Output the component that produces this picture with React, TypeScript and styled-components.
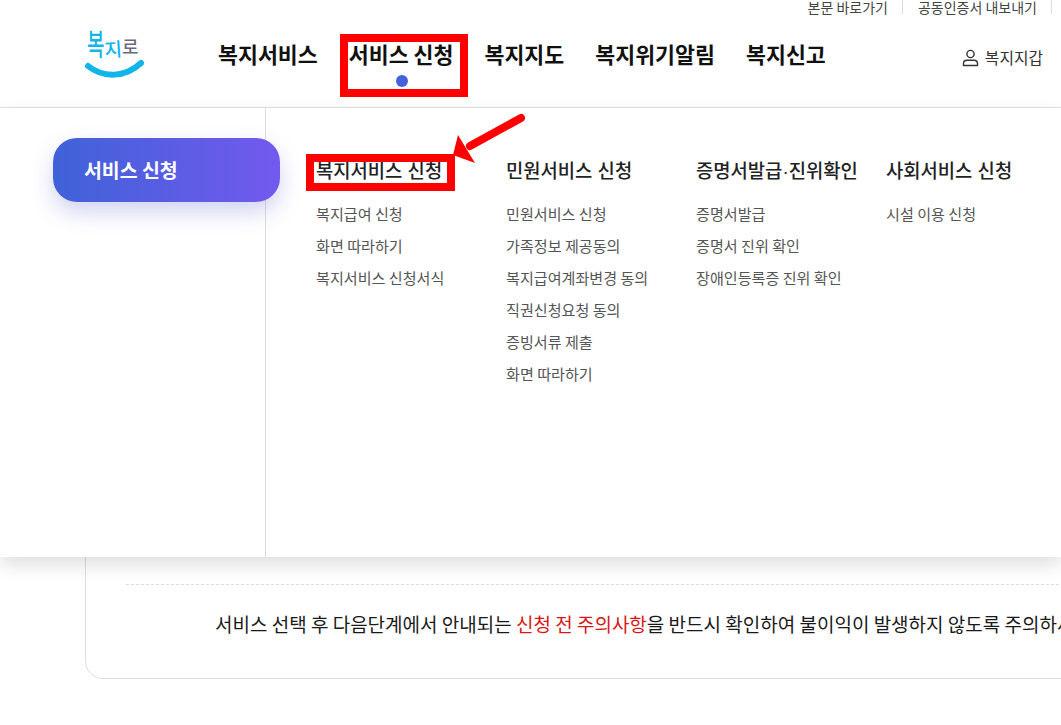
import styled, { createGlobalStyle } from 'styled-components';

const GlobalStyle = createGlobalStyle`
  html, body {
    margin: 0;
    padding: 0;
    background: #fff;
    font-family: 'Noto Sans CJK KR', 'Noto Sans', sans-serif;
    color: #111;
  }
  * { box-sizing: border-box; }
`;

const Page = styled.div`
  position: relative;
  width: 1061px;
  height: 725px;
  overflow: hidden;
  background: #fff;
`;

const Header = styled.header`
  height: 108px;
  border-bottom: 1px solid #e2e2e2;
  display: flex;
  flex-direction: column;
`;

const UtilBar = styled.div`
  height: 15px;
  display: flex;
  justify-content: flex-end;
  align-items: flex-start;
  padding-right: 9px;
  font-size: 14px;
  line-height: 14px;
  color: #444;
`;

const UtilLink = styled.span`
  padding: 0 14px 0 15px;
  border-right: 1px solid #ddd;
  white-space: nowrap;
`;

const MainBar = styled.div`
  flex: 1;
  display: flex;
  align-items: flex-start;
  padding-left: 85px;
`;

const Logo = styled.svg`
  margin-top: 12px;
  flex-shrink: 0;
  overflow: visible;
  font-weight: 500;
`;

const Nav = styled.nav`
  display: flex;
  gap: 31px;
  margin-left: 73px;
`;

const NavItem = styled.div`
  position: relative;
  font-size: 21.7px;
  font-weight: 700;
  line-height: 32px;
  margin-top: 23px;
  white-space: nowrap;
  color: #111;
`;

const NavDot = styled.span`
  position: absolute;
  left: 47px;
  top: 37px;
  width: 12px;
  height: 12px;
  border-radius: 50%;
  background: #4361d8;
`;

const NavMark = styled.span`
  position: absolute;
  left: -9px;
  top: -4px;
  width: 128px;
  height: 63px;
  border: 8px solid #ff0000;
`;

const Wallet = styled.div`
  display: flex;
  align-items: center;
  gap: 6px;
  margin-left: auto;
  margin-top: 32px;
  padding-right: 18px;
  font-size: 15.8px;
  line-height: 22px;
  color: #333;
`;

const Content = styled.main`
  padding: 0 0 0 85px;
`;

const Card = styled.section`
  width: 1100px;
  height: 571px;
  border: 1px solid #ddd;
  border-radius: 0 0 0 18px;
  display: flex;
  flex-direction: column;
  justify-content: flex-end;
  padding: 0 0 34px 40px;
`;

const Notice = styled.div`
  border-top: 1px dashed #ddd;
  padding: 24px 0 0 89px;
  height: 60px;
  font-size: 19px;
  line-height: 30px;
  white-space: nowrap;
  color: #1a1a1a;
`;

const NoticeRed = styled.span`
  color: #d81818;
`;

const Mega = styled.div`
  position: absolute;
  left: 0;
  right: 0;
  top: 108px;
  height: 449px;
  background: #fff;
  display: flex;
  box-shadow: 0 8px 18px rgba(0, 0, 0, 0.13);
`;

const Side = styled.aside`
  width: 266px;
  border-right: 1px solid #ddd;
  padding: 30px 0 0 53px;
  flex-shrink: 0;
`;

const SidePill = styled.div`
  width: 227px;
  height: 64px;
  padding: 0 0 2px 31px;
  border-radius: 24px;
  display: flex;
  align-items: center;
  font-size: 19.4px;
  font-weight: 700;
  color: #fff;
  white-space: nowrap;
  background: linear-gradient(90deg, #3f62d8, #7359ee);
  box-shadow: 0 10px 22px rgba(70, 80, 200, 0.25);
`;

const Columns = styled.div`
  display: flex;
  padding: 50px 0 0 50px;
`;

const Column = styled.div`
  width: 190px;
  flex-shrink: 0;
`;

const ColumnTitle = styled.div`
  position: relative;
  font-family: 'Liberation Sans', 'Noto Sans CJK KR', sans-serif;
  font-size: 18.8px;
  font-weight: 500;
  line-height: 28px;
  color: #222;
  white-space: nowrap;
  margin-bottom: 11px;
`;

const TitleMark = styled.span`
  position: absolute;
  left: -10px;
  top: -4px;
  width: 149px;
  height: 37px;
  border: 8px solid #ff0000;
`;

const ColumnItem = styled.div`
  font-size: 15.1px;
  line-height: 32px;
  color: #555;
  white-space: nowrap;
`;

const Arrow = styled.svg`
  position: absolute;
  left: 445px;
  top: 110px;
`;

const columns = [
  { title: '복지서비스 신청', items: ['복지급여 신청', '화면 따라하기', '복지서비스 신청서식'], marked: true },
  {
    title: '민원서비스 신청',
    items: ['민원서비스 신청', '가족정보 제공동의', '복지급여계좌변경 동의', '직권신청요청 동의', '증빙서류 제출', '화면 따라하기'],
  },
  { title: '증명서발급·진위확인', items: ['증명서발급', '증명서 진위 확인', '장애인등록증 진위 확인'] },
  { title: '사회서비스 신청', items: ['시설 이용 신청'] },
];

const App = () => {
  return (
    <Page>
      <GlobalStyle />
      <Header>
        <UtilBar>
          <UtilLink>본문 바로가기</UtilLink>
          <UtilLink>공동인증서 내보내기</UtilLink>
        </UtilBar>
        <MainBar>
          <Logo width="60" height="54" viewBox="0 0 60 54">
            <text transform="translate(2 28) scale(1 1.55)" fontSize="19" fill="#12b5ea">복</text>
            <text transform="translate(20 30) rotate(-4)" fontSize="19" fill="#12b5ea">지</text>
            <text transform="translate(37 27)" fontSize="18" fill="#6b6b78">로</text>
            <path d="M3 39 C 18 51, 40 51, 56 36" fill="none" stroke="#12b5ea" strokeWidth="6" strokeLinecap="round" />
          </Logo>
          <Nav>
            <NavItem>복지서비스</NavItem>
            <NavItem>
              서비스 신청
              <NavDot />
              <NavMark />
            </NavItem>
            <NavItem>복지지도</NavItem>
            <NavItem>복지위기알림</NavItem>
            <NavItem>복지신고</NavItem>
          </Nav>
          <Wallet>
            <svg width="17" height="18" viewBox="0 0 17 18" fill="none" stroke="#333" strokeWidth="1.4">
              <circle cx="8.5" cy="5" r="3.6" />
              <path d="M1.5 16.5 V14.5 C1.5 12.5 3 11.2 5 11.2 H12 C14 11.2 15.5 12.5 15.5 14.5 V16.5 Z" strokeLinejoin="round" />
            </svg>
            복지지갑
          </Wallet>
        </MainBar>
      </Header>
      <Content>
        <Card>
          <Notice>
            서비스 선택 후 다음단계에서 안내되는 <NoticeRed>신청 전 주의사항</NoticeRed>을 반드시 확인하여 불이익이 발생하지 않도록 주의하세요.
          </Notice>
        </Card>
      </Content>
      <Mega>
        <Side>
          <SidePill>서비스 신청</SidePill>
        </Side>
        <Columns>
          {columns.map((column) => (
            <Column key={column.title}>
              <ColumnTitle>
                {column.title}
                {column.marked && <TitleMark />}
              </ColumnTitle>
              {column.items.map((item) => (
                <ColumnItem key={item}>{item}</ColumnItem>
              ))}
            </Column>
          ))}
        </Columns>
      </Mega>
      <Arrow width="90" height="60" viewBox="0 0 90 60">
        <path d="M76 8 L25 36" stroke="#ff0000" strokeWidth="8" strokeLinecap="round" />
        <path d="M8 45 L13 25 L30 53 Z" fill="#ff0000" />
      </Arrow>
    </Page>
  );
};

export default App;
